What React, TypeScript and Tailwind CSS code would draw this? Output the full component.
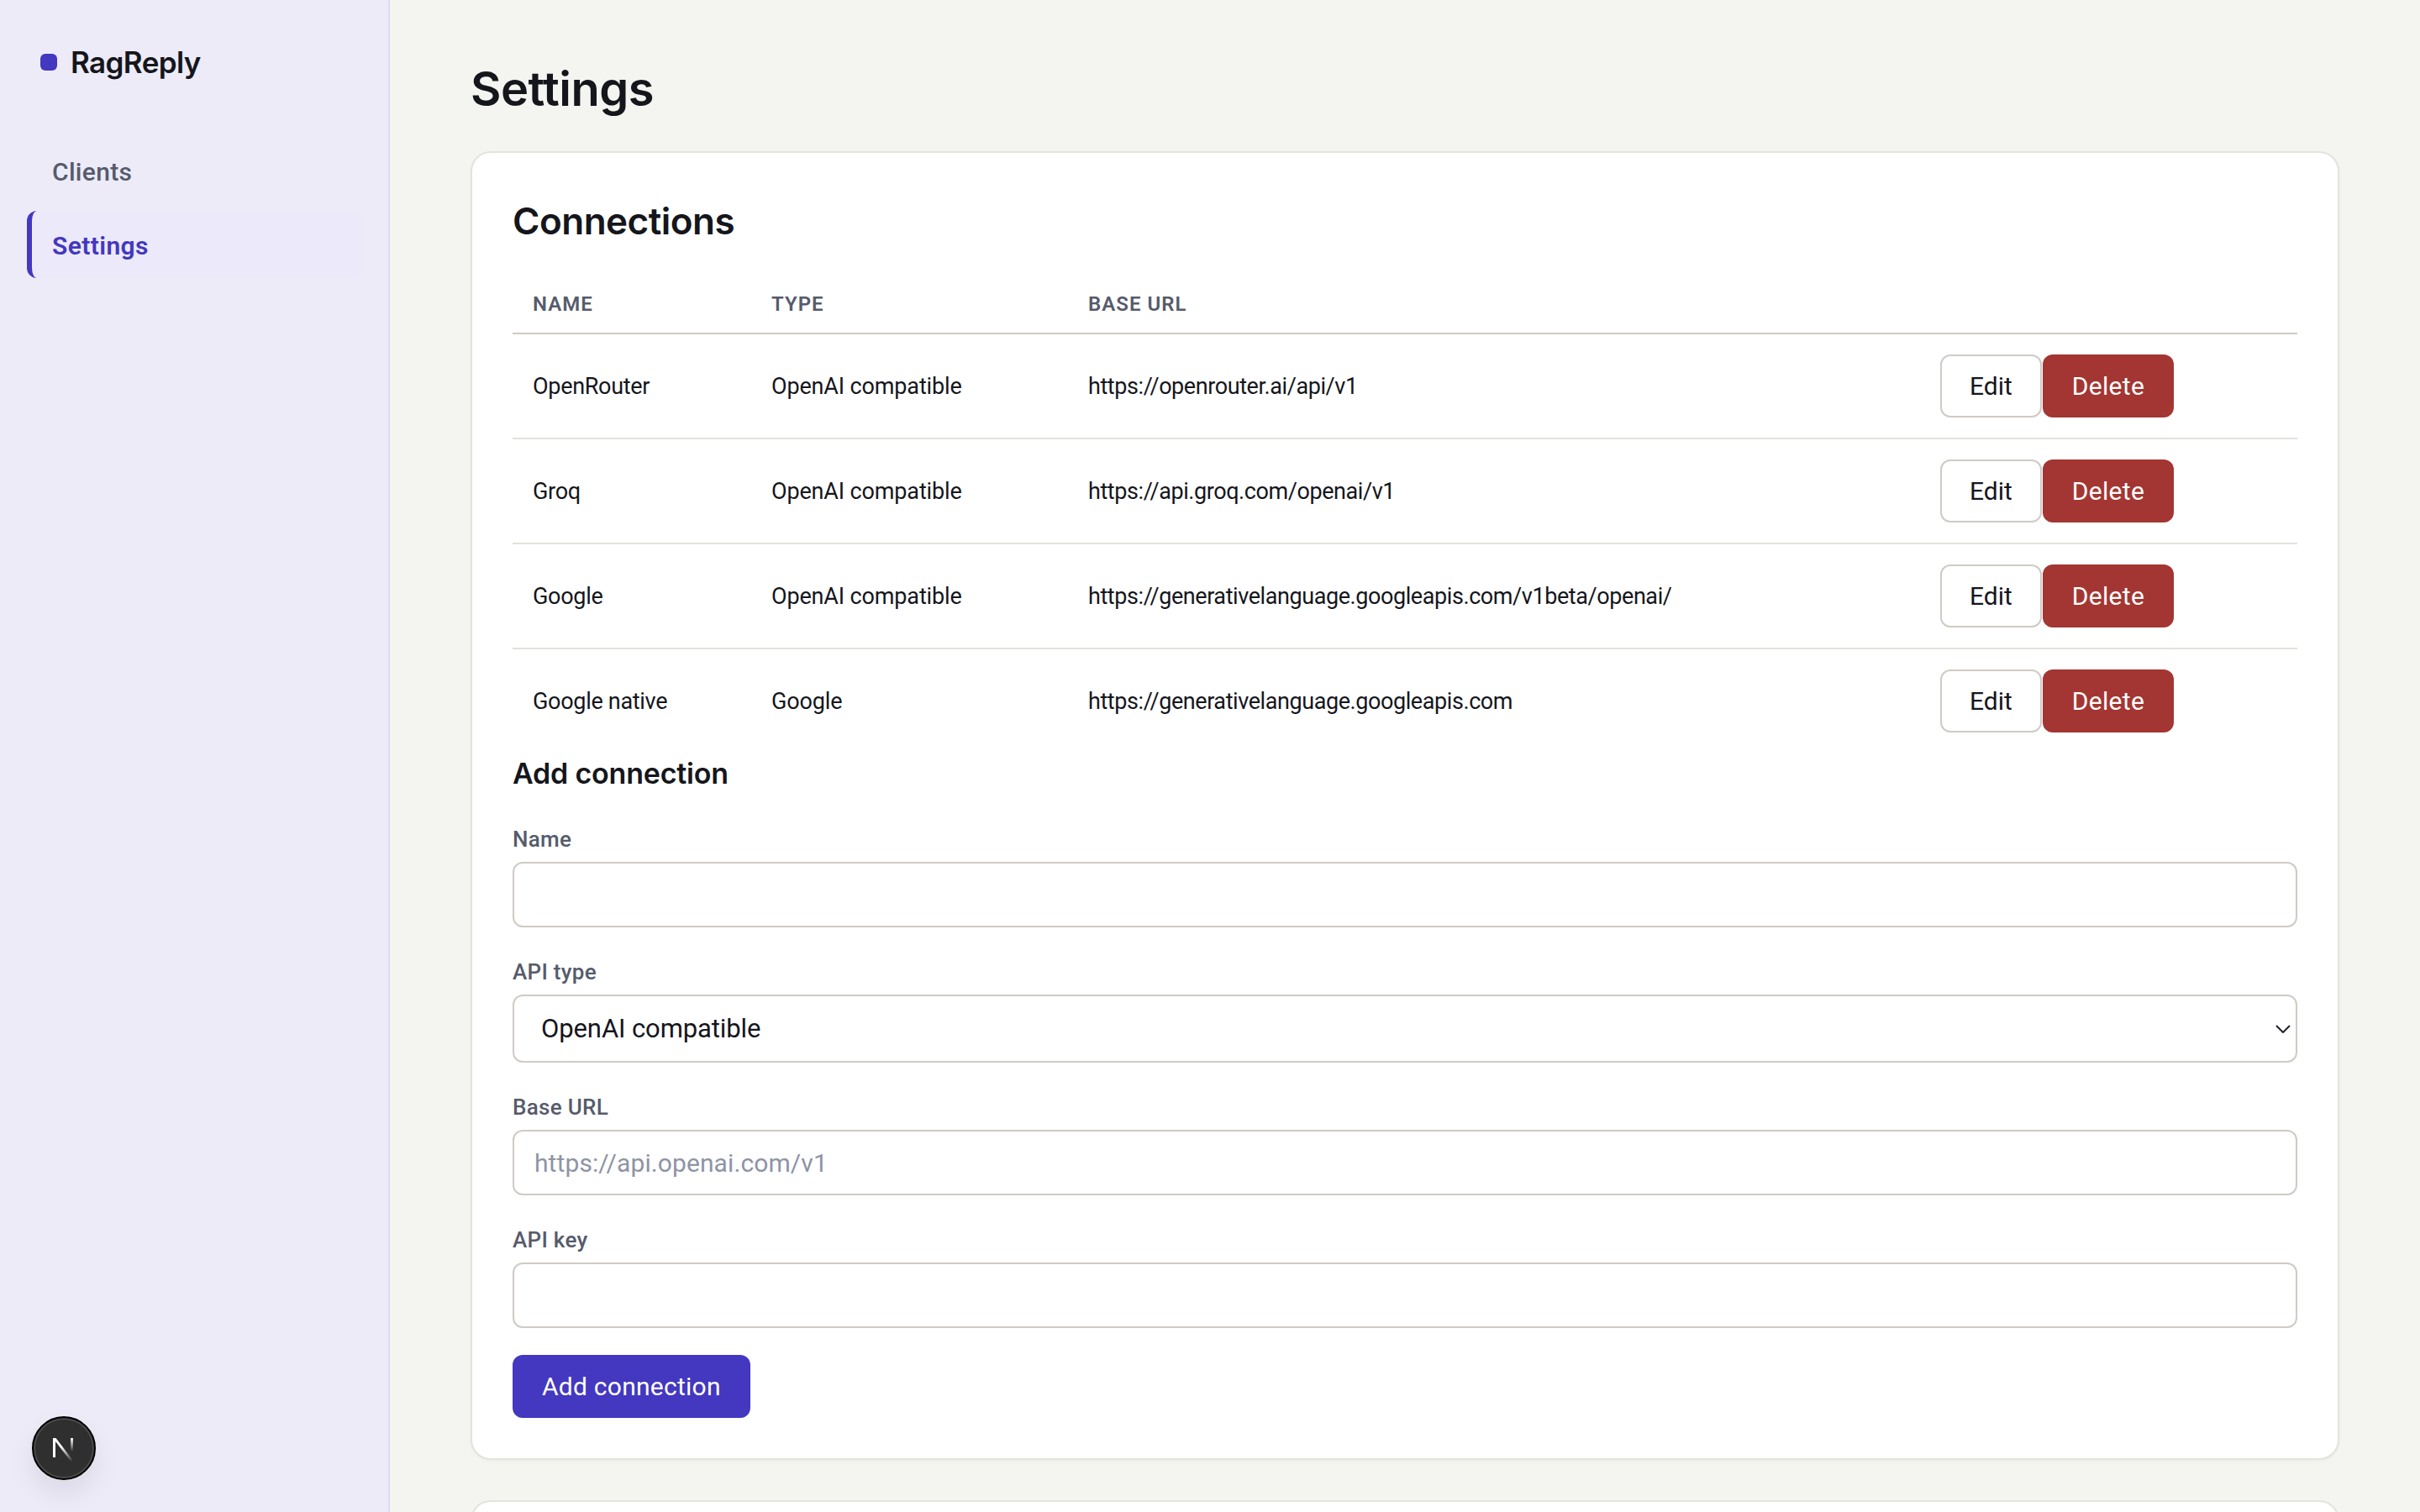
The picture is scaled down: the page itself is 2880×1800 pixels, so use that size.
const rows = [
  ["OpenRouter", "OpenAI compatible", "https://openrouter.ai/api/v1"],
  ["Groq", "OpenAI compatible", "https://api.groq.com/openai/v1"],
  ["Google", "OpenAI compatible", "https://generativelanguage.googleapis.com/v1beta/openai/"],
  ["Google native", "Google", "https://generativelanguage.googleapis.com"],
];
const cellTracking = ["tracking-[-0.3px]", "tracking-[-0.15px]", "tracking-[-0.42px]"];

const body = "[font-family:Roboto,'Liberation_Sans',sans-serif]";
const labelCls = "block h-[39px] mb-[8px] text-[26px] leading-[40px] font-medium tracking-[0.3px] text-[#565b6c]";
const inputCls = "block w-full h-[78px] px-[24px] border-2 border-[#cfcbc5] rounded-[12px] bg-white text-[30px] tracking-[0.1px] text-[#15161c] placeholder:text-[#8f93a6] outline-none";

export default function App() {
  return (
    <div className={`flex h-screen overflow-hidden bg-[#f4f5f0] text-[#15161c] ${body}`}>
      <aside className="w-[464px] shrink-0 border-r-2 border-[#dddbf0] bg-[#edebf8] px-[32px]">
        <div className="flex h-[148px] items-center gap-[16px] pl-[16px]">
          <span className="h-[20px] w-[20px] rounded-[6px] bg-[#4338bf]" />
          <span className="font-['Inter'] text-[35px] leading-[52px] font-semibold tracking-[-0.6px]">RagReply</span>
        </div>
        <nav className="flex flex-col gap-[8px] pt-[15px]">
          <a className="flex h-[80px] items-center pl-[30px] pt-[2px] text-[30px] font-medium tracking-[0.3px] text-[#565b6c]">Clients</a>
          <a className="flex h-[80px] items-center rounded-[12px] border-l-[6px] border-[#4338bf] bg-[#ece9fa] pl-[24px] pt-[2px] text-[30px] font-semibold tracking-[0.4px] text-[#4338bf]">Settings</a>
        </nav>
      </aside>

      <main className="flex-1 min-w-0 overflow-hidden px-[96px] pt-[64px]">
        <h1 className="mb-[32px] h-[84px] font-['Inter'] text-[56px] leading-[84px] font-semibold tracking-[-0.5px]">Settings</h1>

        <section className="rounded-[24px] border-2 border-[#e3e3dd] bg-white p-[48px] shadow-[0_2px_4px_rgba(0,0,0,0.03)]">
          <h2 className="mb-[32px] h-[66px] font-['Inter'] text-[44px] leading-[66px] font-semibold tracking-[-0.5px]">Connections</h2>

          <table className="w-full table-fixed border-collapse">
            <colgroup>
              <col className="w-[284px]" />
              <col className="w-[377px]" />
              <col className="w-[1014px]" />
              <col />
            </colgroup>
            <thead>
              <tr className="border-b-2 border-[#cfcbc5]">
                {["NAME", "TYPE", "BASE URL", ""].map((h, i) => (
                  <th key={i} className="h-[69px] pl-[24px] text-left text-[24px] font-semibold tracking-[1px] text-[#565b6c]">{h}</th>
                ))}
              </tr>
            </thead>
            <tbody>
              {rows.map((r, i) => (
                <tr key={r[0]} className={i < rows.length - 1 ? "border-b-2 border-[#e3e1dc]" : ""}>
                  {r.map((c, j) => (
                    <td key={c} className={`pl-[24px] py-[24px] text-[27px] leading-[42px] ${cellTracking[j]}`}>{c}</td>
                  ))}
                  <td className="pl-[24px] py-[24px]">
                    <div className="flex">
                      <button className="h-[75px] rounded-[12px] border-2 border-[#cfcbc5] bg-white px-[33px] text-[30px] font-[450] text-[#15161c]">Edit</button>
                      <button className="ml-[1px] h-[75px] rounded-[12px] bg-[#a33632] px-[35px] text-[30px] font-[450] tracking-[0.3px] text-white">Delete</button>
                    </div>
                  </td>
                </tr>
              ))}
            </tbody>
          </table>

          <h3 className="mb-[32px] h-[51px] font-['Inter'] text-[34px] leading-[50px] font-semibold tracking-[-0.2px]">Add connection</h3>

          <div className="flex flex-col gap-[33px]">
            <div>
              <label className={labelCls}>Name</label>
              <input className={inputCls} />
            </div>
            <div>
              <label className={labelCls}>API type</label>
              <div className="relative">
                <select className="block h-[81px] w-full appearance-none rounded-[12px] border-2 border-[#cfcbc5] bg-white px-[32px] pt-[2px] text-[31px] tracking-[-0.1px] text-[#15161c] outline-none">
                  <option>OpenAI compatible</option>
                  <option>Google</option>
                </select>
                <svg className="pointer-events-none absolute right-[8px] top-[36px] h-[10px] w-[18px]" viewBox="0 0 18 10" fill="none" stroke="#22232b" strokeWidth="2">
                  <path d="M1 1l8 8 8-8" />
                </svg>
              </div>
            </div>
            <div>
              <label className={labelCls}>Base URL</label>
              <input className={inputCls} placeholder="https://api.openai.com/v1" />
            </div>
            <div>
              <label className={labelCls}>API key</label>
              <input className={inputCls} />
            </div>
          </div>

          <button className="mt-[32px] h-[75px] rounded-[12px] bg-[#4338bf] px-[35px] text-[30px] font-[450] tracking-[0.25px] text-white">Add connection</button>
        </section>

        <section className="mt-[48px] h-[200px] rounded-[24px] border-2 border-[#e3e3dd] bg-white" />
      </main>

      <div className="fixed left-[38px] top-[1686px] flex h-[76px] w-[76px] items-center justify-center rounded-full border-2 border-black bg-[#2f2f2f] shadow-[inset_0_0_0_2px_#4a4a4a,0_16px_32px_rgba(0,0,0,0.08)]">
        <svg width="32" height="32" viewBox="0 0 32 32" fill="none">
          <defs>
            <linearGradient id="ng" x1="14" y1="14" x2="27" y2="31" gradientUnits="userSpaceOnUse">
              <stop offset="0" stopColor="#fff" />
              <stop offset="1" stopColor="#fff" stopOpacity="0" />
            </linearGradient>
            <linearGradient id="ng2" x1="25" y1="4" x2="25" y2="20" gradientUnits="userSpaceOnUse">
              <stop offset="0" stopColor="#fff" />
              <stop offset="1" stopColor="#fff" stopOpacity="0" />
            </linearGradient>
          </defs>
          <path d="M3 4h3v23H3z" fill="#fff" />
          <path d="M3 4h3.5L28 32h-3.5z" fill="url(#ng)" />
          <path d="M24 4h3v16h-3z" fill="url(#ng2)" />
        </svg>
      </div>
    </div>
  );
}
